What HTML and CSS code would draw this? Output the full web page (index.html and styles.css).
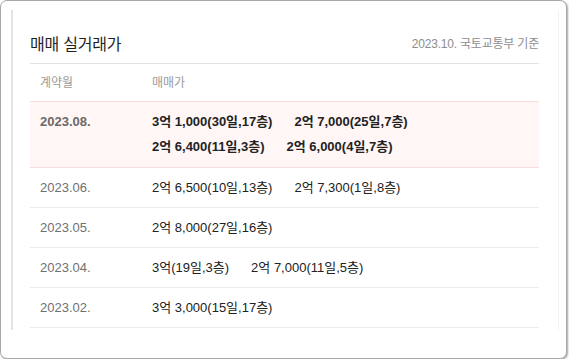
FILE: index.html
```html
<!DOCTYPE html>
<html lang="ko">
<head>
<meta charset="utf-8">
<link rel="stylesheet" href="styles.css">
</head>
<body>
<div class="frame">
  <div class="panel">
    <div class="head">
      <h2 class="title">매매 실거래가</h2>
      <span class="source">2023.10. 국토교통부 기준</span>
    </div>
    <div class="table">
      <div class="row th">
        <div class="c1">계약월</div>
        <div class="c2">매매가</div>
      </div>
      <div class="row hl">
        <div class="c1">2023.08.</div>
        <div class="c2">
          <span class="deal">3억 1,000(30일,17층)</span><span class="deal">2억 7,000(25일,7층)</span><span class="deal">2억 6,400(11일,3층)</span><span class="deal">2억 6,000(4일,7층)</span>
        </div>
      </div>
      <div class="row">
        <div class="c1">2023.06.</div>
        <div class="c2"><span class="deal">2억 6,500(10일,13층)</span><span class="deal">2억 7,300(1일,8층)</span></div>
      </div>
      <div class="row">
        <div class="c1">2023.05.</div>
        <div class="c2"><span class="deal">2억 8,000(27일,16층)</span></div>
      </div>
      <div class="row">
        <div class="c1">2023.04.</div>
        <div class="c2"><span class="deal">3억(19일,3층)</span><span class="deal">2억 7,000(11일,5층)</span></div>
      </div>
      <div class="row">
        <div class="c1">2023.02.</div>
        <div class="c2"><span class="deal">3억 3,000(15일,17층)</span></div>
      </div>
    </div>
  </div>
</div>
</body>
</html>
```

FILE: styles.css
```css
html, body {
  margin: 0;
  padding: 0;
  background: #ffffff;
}
body {
  font-family: "Liberation Sans", "Noto Sans CJK KR", Arial, sans-serif;
  color: #222;
}
.frame {
  box-sizing: border-box;
  width: 567px;
  height: 359px;
  border: 1px solid #a8a8a8;
  border-radius: 7px;
  box-shadow: 1px 1px 2px rgba(0, 0, 0, 0.35);
  background: #fff;
  padding: 9px 7px 0 10px;
}
.panel {
  box-sizing: border-box;
  height: 320px;
  border-left: 2px solid #e4e4e4;
  border-right: 1px solid #f3f3f3;
  padding: 0 19px 0 17px;
}
.head {
  display: flex;
  justify-content: space-between;
  align-items: center;
  height: 54px;
  padding-top: 12px;
  box-sizing: border-box;
  border-bottom: 1px solid #e3e3e3;
}
.title {
  margin: 0;
  font-size: 16px;
  font-weight: normal;
  color: #1e1e1e;
  letter-spacing: -0.2px;
}
.source {
  font-size: 12px;
  color: #8d8d8d;
  letter-spacing: -0.2px;
}
.row {
  display: flex;
  box-sizing: border-box;
  min-height: 40px;
  border-bottom: 1px solid #ececec;
  font-size: 13px;
  line-height: 25px;
  padding: 7px 0;
}
.row.th {
  height: 38px;
  min-height: 38px;
  border-bottom: 1px solid #fadcdc;
  font-size: 12px;
  color: #9a9a9a;
  padding: 7px 0 5px;
}
.row.th .c1, .row.th .c2 {
  color: #9a9a9a;
}
.row.hl {
  background: #fff6f5;
  border-bottom: 1px solid #fadcdc;
  font-weight: bold;
  padding: 7px 0 8px;
}
.c1 {
  width: 112px;
  padding-left: 10px;
  flex-shrink: 0;
  color: #707070;
}
.row.hl .c1 {
  color: #6a6a6a;
}
.c2 {
  flex: 1;
  display: flex;
  flex-wrap: wrap;
  color: #222;
}
.deal {
  margin-right: 22px;
  white-space: nowrap;
}
```
